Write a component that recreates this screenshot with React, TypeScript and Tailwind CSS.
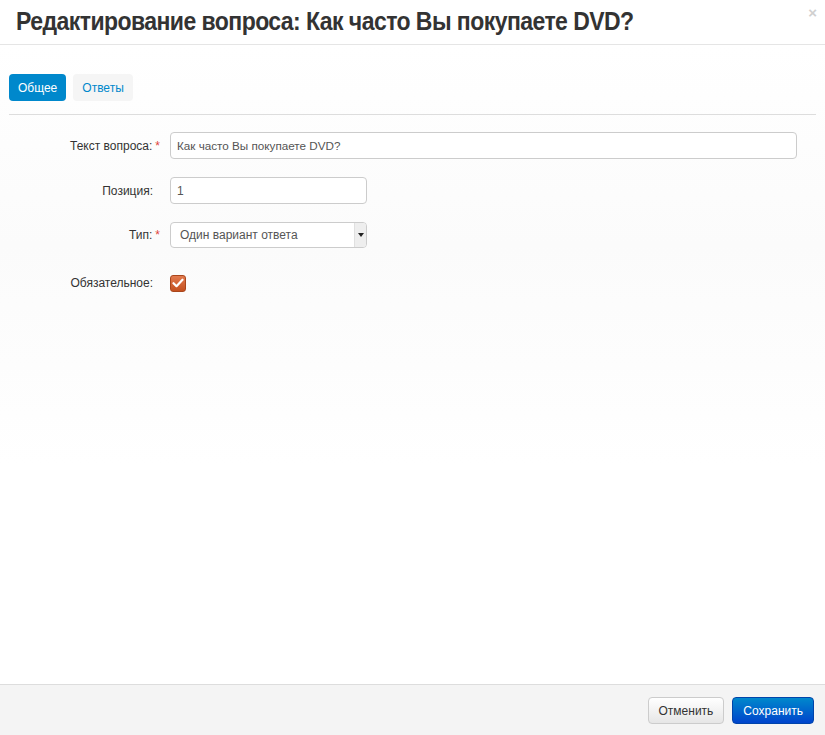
import React from "react";

const Required = () => <span className="text-[#e0443c] ml-[3px]">*</span>;

const FormRow = ({ label, required, children, className = "" }: { label: string; required?: boolean; children: React.ReactNode; className?: string }) => (
  <div className={`flex items-center ${className}`}>
    <div className="w-[161px] pr-[10px] text-right text-[12px] text-[#333]">
      {label}
      {required ? <Required /> : <span className="inline-block w-[7px]" />}
    </div>
    <div className="flex-1">{children}</div>
  </div>
);

export default function App() {
  return (
    <div className="w-[825px] h-[735px] flex flex-col bg-white font-['Liberation_Sans',Arial,sans-serif] text-[#333]">
      <div className="relative h-[45px] border-b border-[#e5e5e5] px-[16px] flex items-center">
        <h3 className="text-[25px] font-bold text-[#333] tracking-[-0.6px] font-['Liberation_Sans_Narrow','Liberation_Sans',sans-serif] scale-x-[0.92] origin-left whitespace-nowrap">
          Редактирование вопроса: Как часто Вы покупаете DVD?
        </h3>
        <span className="absolute right-[8px] top-[2px] text-[15px] font-bold text-[#d0d0d0]">×</span>
      </div>

      <div className="flex-1 flex flex-col px-[9px] pt-[29px] bg-[linear-gradient(to_bottom,#ffffff_0px,#fbfbfb_200px,#fdfdfd_320px,#ffffff_420px)]">
        <div className="flex gap-[7px] pb-[13px] border-b border-[#dddddd]">
          <div className="h-[27px] px-[9px] rounded-[4px] bg-[#0088cc] text-white text-[12px] flex items-center">Общее</div>
          <div className="h-[27px] px-[9px] rounded-[4px] bg-[#f5f5f5] text-[#0088cc] text-[12px] flex items-center">Ответы</div>
        </div>

        <div className="flex flex-col pt-[17px]">
          <FormRow label="Текст вопроса:" required>
            <div className="h-[27px] w-[627px] border border-[#cccccc] rounded-[4px] bg-white px-[6px] flex items-center text-[11.7px] text-[#555]">
              Как часто Вы покупаете DVD?
            </div>
          </FormRow>
          <FormRow label="Позиция:" className="mt-[18px]">
            <div className="h-[27px] w-[197px] border border-[#cccccc] rounded-[4px] bg-white px-[6px] flex items-center text-[12px] text-[#555]">
              1
            </div>
          </FormRow>
          <FormRow label="Тип:" required className="mt-[18px]">
            <div className="h-[26px] w-[197px] border border-[#cccccc] rounded-[4px] bg-white flex items-center text-[12px] text-[#555] overflow-hidden">
              <span className="flex-1 pl-[9px]">Один вариант ответа</span>
              <span className="w-[12px] h-full bg-[#eeeeee] border-l border-[#e0e0e0] flex items-center justify-center">
                <svg width="6" height="4" viewBox="0 0 6 4"><path d="M0 0h6L3 4z" fill="#222" /></svg>
              </span>
            </div>
          </FormRow>
          <FormRow label="Обязательное:" className="mt-[26px]">
            <div className="w-[16px] h-[17px] rounded-[3px] bg-[linear-gradient(to_bottom,#e27a4e,#c4501f)] border border-[#a9461c] flex items-center justify-center">
              <svg width="12" height="10" viewBox="0 0 12 10"><path d="M1.5 5.2l3 3 6-6.5" fill="none" stroke="#fff" strokeWidth="2.2" strokeLinecap="round" strokeLinejoin="round" /></svg>
            </div>
          </FormRow>
        </div>
      </div>

      <div className="h-[51px] border-t border-[#dddddd] bg-[#f4f4f4] flex items-center justify-end gap-[8px] pr-[11px] pt-[1px]">
        <div className="h-[27px] px-[10px] rounded-[4px] border border-[#cccccc] bg-[linear-gradient(to_bottom,#ffffff,#e6e6e6)] text-[12px] text-[#333] flex items-center">
          Отменить
        </div>
        <div className="h-[27px] px-[10px] rounded-[4px] border border-[#0044aa] bg-[linear-gradient(to_bottom,#0088cc,#0044cc)] text-[12px] text-white flex items-center">
          Сохранить
        </div>
      </div>
    </div>
  );
}
